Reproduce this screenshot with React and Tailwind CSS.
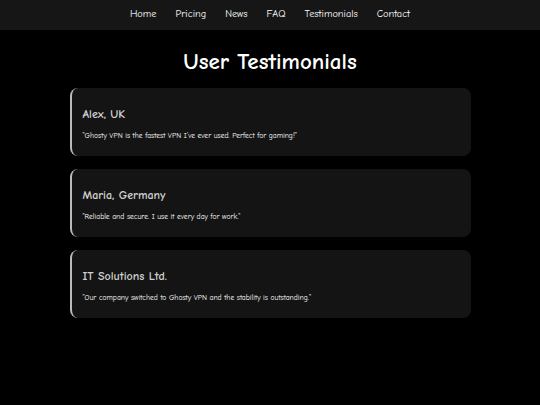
import React from 'react';

const links = ['Home', 'Pricing', 'News', 'FAQ', 'Testimonials', 'Contact'];

const testimonials = [
  { name: 'Alex, UK', quote: '"Ghosty VPN is the fastest VPN I\'ve ever used. Perfect for gaming!"' },
  { name: 'Maria, Germany', quote: '"Reliable and secure. I use it every day for work."' },
  { name: 'IT Solutions Ltd.', quote: '"Our company switched to Ghosty VPN and the stability is outstanding."' },
];

export default function App() {
  return (
    <div
      className="min-h-[405px] w-full bg-black text-white"
      style={{ fontFamily: '"Comic Sans MS", "Comic Neue", "DejaVu Sans", sans-serif' }}
    >
      {/* Nav */}
      <nav className="flex h-[30px] items-center justify-center gap-[19px] bg-[#161616] text-[10.3px]">
        {links.map((l) => (
          <a key={l} className="text-white">{l}</a>
        ))}
      </nav>

      {/* Title */}
      <h1 className="mt-[17px] text-center text-[23px] font-bold leading-[30px]">User Testimonials</h1>

      {/* Cards */}
      <div className="mx-auto mt-[11px] flex w-[401px] flex-col gap-[13px]">
        {testimonials.map((t) => (
          <div
            key={t.name}
            className="h-[68px] rounded-lg border-l-2 border-[#bbbbbb] bg-[#141414] px-[11px] pt-[17px]"
          >
            <h3 className="text-[12px] font-bold leading-[18px] text-[#cfcfcf]">{t.name}</h3>
            <p className="mt-[8px] text-[7.6px] leading-[10px] text-white">{t.quote}</p>
          </div>
        ))}
      </div>
    </div>
  );
}
